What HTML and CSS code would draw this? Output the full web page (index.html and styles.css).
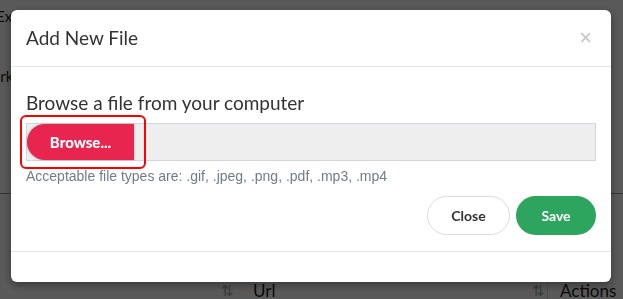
FILE: index.html
```html
<!DOCTYPE html>
<html lang="en">
<head>
  <meta charset="UTF-8">
  <meta name="viewport" content="width=device-width, initial-scale=1.0">
  <title>Add New File</title>
  <link rel="stylesheet" href="styles.css">
</head>
<body>
  <!-- page behind the dialog -->
  <div class="page">
    <div class="page-title">Export</div>
    <div class="page-sub">Work</div>
    <div class="page-rule"></div>
    <div class="table-head">
      <div class="th th-first"></div>
      <div class="th th-url"><span class="sort">&#8645;</span><span>Url</span></div>
      <div class="th th-actions"><span class="sort">&#8645;</span><span>Actions</span></div>
    </div>
  </div>

  <div class="backdrop"></div>

  <div class="modal">
    <div class="modal-header">
      <h4>Add New File</h4>
      <span class="close-x">&times;</span>
    </div>
    <div class="modal-body">
      <label class="file-label">Browse a file from your computer</label>
      <div class="file-group">
        <span class="focus-ring"></span>
        <button class="browse-btn">Browse...</button>
        <div class="file-name"></div>
      </div>
      <p class="help">Acceptable file types are: .gif, .jpeg, .png, .pdf, .mp3, .mp4</p>
      <div class="actions">
        <button class="btn btn-close">Close</button>
        <button class="btn btn-save">Save</button>
      </div>
    </div>
    <div class="modal-footer"></div>
  </div>
</body>
</html>
```

FILE: styles.css
```css
body {
  margin: 0;
  padding: 0;
  font-family: Lato, "Liberation Sans", sans-serif;
  color: #333;
  background: #fff;
  height: 299px;
  overflow: hidden;
}

.page {
  position: relative;
  padding: 4px 0 0 0;
  font-size: 15px;
  color: #222;
}

.page-title { margin-left: -4px; height: 24px; line-height: 24px; }
.page-sub { margin-left: -23px; margin-top: 36px; height: 24px; line-height: 24px; }

.page-rule {
  margin-top: 105px;
  border-top: 1px solid #999;
}

.table-head {
  display: flex;
  margin-top: 81px;
  height: 30px;
  font-size: 17px;
}

.th {
  display: flex;
  align-items: center;
  gap: 10px;
}

.th-first { width: 221px; }
.th-url { width: 326px; border-right: 1px solid #ddd; }
.th-actions { margin-left: -16px; gap: 14px; }

.sort { color: #aaa; font-size: 15px; width: 14px; }

.th-url .sort { margin-right: 8px; }

.backdrop {
  position: fixed;
  inset: 0;
  background: rgba(0,0,0,0.65);
}

.modal {
  position: fixed;
  left: 11px;
  top: 10px;
  width: 600px;
  height: 272px;
  background: #fff;
  border-radius: 6px;
  box-shadow: 0 3px 9px rgba(0,0,0,0.4);
}

.modal-header {
  padding: 15px;
  border-bottom: 1px solid #e5e5e5;
  display: flex;
  justify-content: space-between;
  align-items: center;
}

.modal-header h4 {
  margin: 0;
  font-size: 19px;
  font-weight: 400;
  line-height: 26px;
  color: #333;
}

.close-x {
  font-family: "Liberation Sans", sans-serif;
  font-size: 22px;
  color: #c4c4c4;
  line-height: 20px;
  margin-right: 4px;
}

.modal-body {
  padding: 15px;
  height: 154px;
}

.file-label {
  display: block;
  margin-top: 8px;
  font-size: 19px;
  line-height: 26px;
  color: #333;
}

.file-group {
  position: relative;
  display: flex;
  margin-top: 7px;
  height: 38px;
  border: 1px solid #d2d6de;
  background: #eee;
  box-sizing: border-box;
}

.browse-btn {
  width: 107px;
  border: none;
  background: #e8254f;
  color: #fff;
  font-family: Lato, sans-serif;
  font-weight: 900;
  font-size: 15px;
  border-radius: 18px 0 0 18px;
  margin: 0;
  padding: 0;
  box-shadow: 0 0 3px rgba(0,0,0,0.25);
}

.file-name { flex: 1; }

.focus-ring {
  position: absolute;
  left: -7px;
  top: -9px;
  width: 122px;
  height: 50px;
  border: 2px solid #f00;
  border-radius: 6px;
}

.help {
  margin: 6px 0 0 0;
  font-family: "Liberation Sans", Arial, sans-serif;
  font-size: 14px;
  line-height: 19px;
  color: #737b85;
}

.actions {
  display: flex;
  justify-content: flex-end;
  gap: 6px;
  margin-top: 10px;
}

.btn {
  height: 39px;
  border-radius: 20px;
  font-family: Lato, sans-serif;
  font-weight: 700;
  font-size: 14px;
  padding: 0;
}

.btn-close {
  width: 83px;
  background: #fff;
  border: 1px solid #d7dde0;
  color: #333;
}

.btn-save {
  width: 80px;
  background: #2ea55e;
  border: none;
  color: #fff;
}

.modal-footer {
  border-top: 1px solid #e5e5e5;
  height: 29px;
}
```
